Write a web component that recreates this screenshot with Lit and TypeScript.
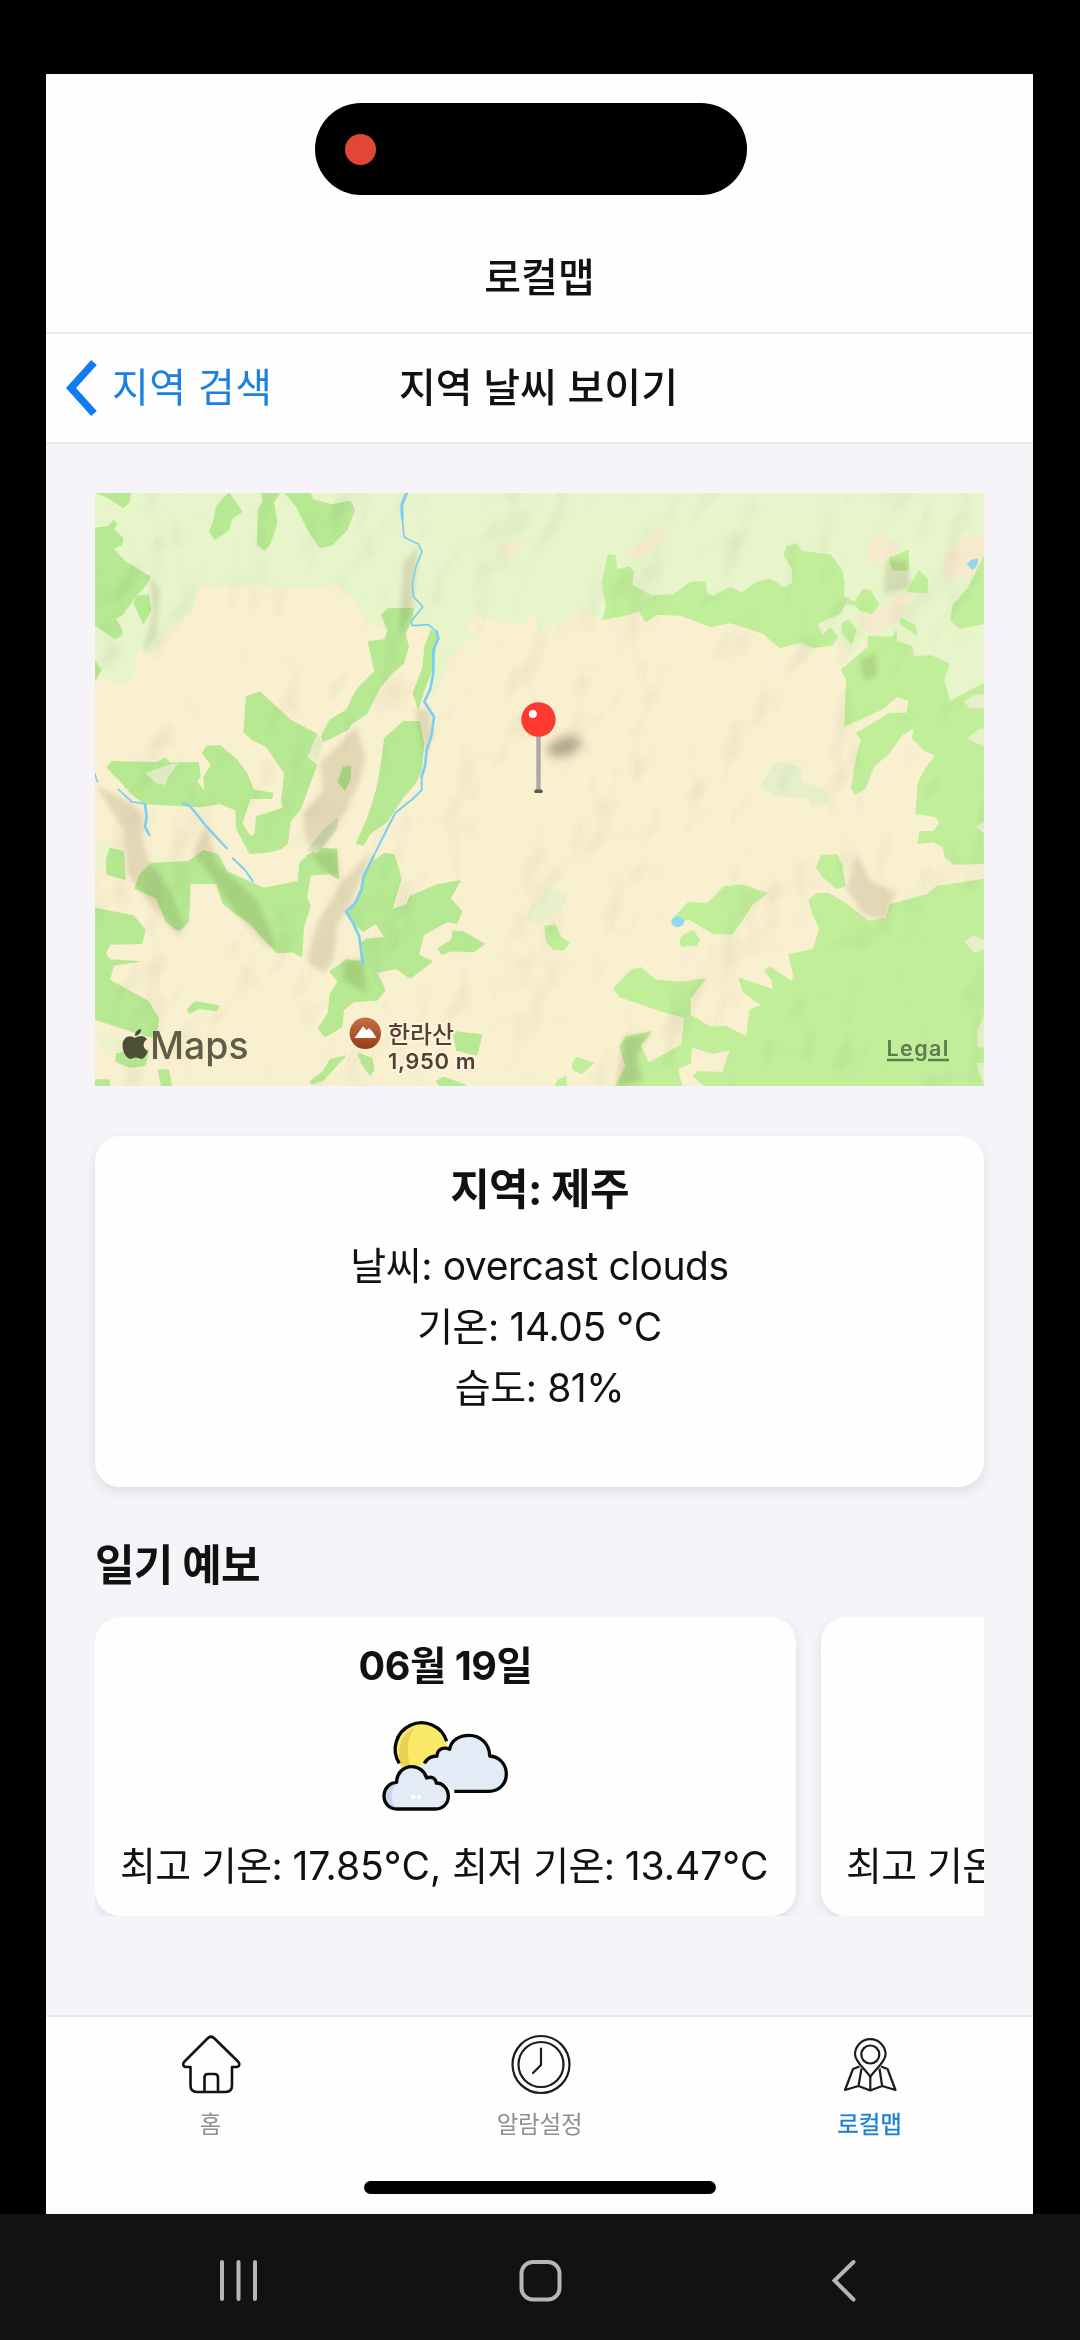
import { LitElement, html, svg, css } from "lit";
import { customElement, property } from "lit/decorators.js";

const FOREST_WEST = [
  "20,38 122,38 118,65 100,82 75,65 50,50",
  "400,55 418,40 455,95 425,115 415,150 375,178 360,155 375,110 380,80",
  "515,38 570,38 550,65 560,130 540,190 525,210 503,195 505,90 520,65",
  "585,38 660,38 668,60 725,75 780,65 793,90 770,150 725,195 690,203 655,150 620,80",
  "16,145 55,140 70,122 80,132 70,148 98,175 95,195 68,205 105,245 180,290 170,310 135,350 100,400 75,415 95,450 95,465 75,475 16,435",
  "140,350 175,345 182,390 160,430 145,395 133,370",
  "16,545 32,570 16,600",
  "875,405 895,387 970,385 965,420 945,460 955,500 940,550 905,580 870,620 830,700 785,730 770,750 700,785 695,770 720,720 770,690 800,630 855,575 835,485 885,480 895,450",
  "1025,450 1040,465 1030,560 1005,620 985,685 970,640 1000,560 1005,500",
  "470,650 510,637 600,720 680,762 652,832 680,855 655,920 632,985 600,1025 592,1090 575,1105 540,1115 480,1120 440,1045 438,990 390,970 330,980 160,970 120,935 52,862 65,845 200,848 225,835 240,850 325,848 330,890 320,905 345,940 342,890 365,855 338,820 350,800 390,797 440,840 470,880 490,930 548,940 545,955 480,955 455,1030 480,1070 495,1065 500,1010 580,985 575,960 585,880 530,800 490,780 462,755",
  "760,862 782,860 780,900 765,930 745,905",
  "885,775 940,725 988,725 1000,790 995,870 975,910 940,950 890,1025 840,1060 820,1095 800,1090 835,1010 860,930 870,880",
  "50,1115 60,1105 100,1115 105,1198 50,1182",
  "135,1225 150,1185 185,1150 295,1145 340,1112 385,1125 410,1175 520,1225 625,1205 630,1150 655,1125 690,1105 740,1108 745,1195 720,1180 660,1185 650,1250 660,1280 640,1340 635,1430 610,1415 560,1418 480,1330 430,1295 400,1270 380,1210 300,1210 295,1325 265,1352 230,1325 200,1255",
  "16,1285 130,1308 165,1350 155,1390 60,1392 45,1420 60,1440 145,1445 70,1455 58,1500 175,1565 205,1615 200,1665 180,1670 130,1655 16,1618",
  "292,1590 315,1565 385,1578 380,1592 325,1585 300,1600",
  "820,1200 850,1145 885,1120 912,1125 933,1195 905,1290 950,1275 960,1250 1040,1215 1110,1203 1080,1255 1115,1295 1100,1330 1070,1325 1000,1365 985,1425 1025,1445 960,1495 920,1465 830,1482 820,1460 812,1390 830,1378 885,1372 858,1330 820,1353 790,1330 775,1300 795,1270",
  "1045,1405 1085,1380 1090,1353 1120,1356 1183,1392 1150,1415 1085,1412 1055,1422",
  "720,1475 770,1440 820,1445 825,1480 860,1480 885,1530 860,1560 790,1565 760,1590 755,1640 705,1670 685,1645 715,1600 720,1545 745,1505",
  "660,1805 700,1775 720,1740 765,1728 700,1800 665,1812",
  "805,1720 845,1735 852,1770 840,1785 815,1750",
  "205,1770 235,1770 245,1818 215,1818",
  "80,1720 110,1700 175,1710 165,1755 120,1762 78,1745",
  "1090,1655 1175,1665 1160,1725 1100,1710",
  "1040,1805 1060,1792 1125,1815 1125,1818 1050,1818",
  "16,1800 58,1800 58,1818 16,1818",
];

const FOREST_EAST = [
  "205,225 225,228 230,270 265,262 280,275 275,315 335,348 400,345 450,308 495,305 500,340 520,350 570,322 605,340 650,308 690,298 735,325 758,310 757,265 733,225 740,200 770,192 785,215 870,225 905,270 912,310 910,350 945,368 970,328 990,332 1015,372 995,400 960,390 945,375 915,370 900,400 830,430 848,468 870,445 893,470 875,495 820,502 780,485 720,503 670,460 570,427 515,440 420,405 350,402 318,425 297,392 270,402 190,418 200,380 187,310",
  "925,420 948,450 935,490 905,460 908,430",
  "1105,212 1105,270 1060,270 1048,235",
  "1137,273 1163,300 1160,338 1102,335",
  "1085,415 1125,438 1130,463 1080,430",
  "1332,230 1332,430 1260,445 1232,420 1240,375 1285,325",
  "905,570 985,500 985,470 1060,472 1068,452 1070,485 1115,500 1120,530 1175,528 1227,552 1210,600 1230,665 1332,610 1332,1150 1240,1152 1215,1130 1210,1100 1180,1085 1135,1090 1140,1055 1180,1055 1200,1030 1190,1010 1128,1000 1135,910 1155,870 1188,825 1160,815 1117,775 1125,740 1085,765 1050,815 1000,860 975,925 945,942 935,925 950,830 965,780 950,760 975,745 1050,700 1100,700 1108,660 1070,650 1030,685 915,738 920,600",
  "845,1128 890,1125 905,1155 915,1218 890,1225 850,1190 830,1162",
  "405,1310 445,1268 500,1272 530,1245 550,1222 605,1215 680,1240 635,1275 600,1330 575,1362 520,1360 470,1330 445,1315 430,1325",
  "420,1380 430,1365 460,1352 478,1380 470,1395 425,1398",
  "15,1340 45,1335 65,1375 88,1388 70,1410 40,1408 20,1385",
  "222,1525 275,1470 302,1463 345,1500 420,1507 495,1497 450,1555 450,1605 510,1642 560,1640 620,1672 630,1590 665,1575 610,1535 597,1495 700,1530 697,1500 675,1470 690,1462 755,1505 762,1490 747,1425 820,1408 840,1345 820,1305 807,1260 830,1242 865,1240 930,1280 985,1325 1040,1315 1050,1275 1160,1245 1190,1220 1332,1198 1332,1818 495,1818 460,1788 475,1775 548,1778 573,1708 520,1720 455,1700 450,1750 412,1765 425,1818 228,1818 258,1760 240,1700 260,1670 335,1655 300,1695 325,1750 425,1695 435,1612 370,1595 240,1550",
  "97,1755 110,1732 160,1750 125,1780 100,1770",
  "45,1818 55,1800 78,1790 78,1818",
];

const SAND = [
  "265,205 300,195 355,152 375,160 370,185 320,215 290,235",
  "1010,170 1045,170 1072,210 1000,255 980,225",
  "945,410 1040,375 1080,345 1115,345 1080,415 1000,465",
  "1215,240 1250,190 1290,165 1332,165 1332,240 1290,300 1260,285 1220,300",
  "-125,200 -55,180 -60,205 -90,240",
];

const MEADOW_EAST = [
  "1275,665 1300,648 1332,645 1332,683 1290,683",
  "1285,775 1320,748 1332,748 1332,798",
  "1275,1385 1300,1367 1332,1382 1332,1405 1305,1417",
  "1312,1660 1332,1610 1332,1700 1315,1700",
  "1312,1750 1332,1750 1332,1810",
  "1312,1040 1332,1025 1332,1060",
  "660,920 705,850 740,848 780,870 785,905 860,935 862,965 820,980 800,950 720,950",
];

const RIVERS: Array<[string, number]> = [
  ["950,38 935,75 937,115", 9],
  ["937,115 942,170 962,182 985,192 996,215 978,260 967,310 970,350 998,380 963,425 968,437 1015,434 1040,455", 5],
  ["1040,455 1045,475 1030,510 1030,580 1020,630 1003,665 1032,710 1025,765 1010,810 1005,860 995,890", 8],
  ["995,890 995,930 965,960 945,975 915,1000 890,1050 850,1130", 6],
  ["850,1130 820,1190 815,1230 795,1270 768,1295 790,1330 808,1370 818,1450", 8],
  ["14,880 22,905", 5],
  ["85,928 125,965 165,972", 5],
  ["165,972 170,1010 165,1040 178,1065", 8],
  ["280,970 300,978 350,1040 410,1105", 7],
  ["428,1135 465,1170 488,1203", 6],
];

const RELIEF = [
  "690,850 800,740 825,830 810,900 770,990 700,1110 650,1090 640,1000 700,930",
  "850,1110 780,1270 740,1340 730,1440 700,1480 650,1440 680,1330 760,1200",
  "16,915 90,950 160,1000 160,1090 180,1150 240,1230 285,1340 265,1370 190,1280 110,1180 100,1050 40,950",
  "310,1120 350,1030 380,1150 500,1260 560,1400 530,1400 430,1290 370,1200",
  "660,1120 740,1110 750,1200 700,1170",
  "760,1440 820,1440 830,1540 760,1500",
  "975,685 1015,690 1030,760 1005,830 985,740",
  "940,250 985,200 965,400 925,480",
  "180,290 210,330 200,460 160,520 190,400",
  "2300,1120 2340,1200 2420,1240 2380,1320 2330,1310 2270,1230",
  "2390,240 2450,240 2460,320 2380,340",
  "2310,540 2360,520 2360,590 2320,600",
  "1600,1670 1680,1660 1640,1730 1660,1800 1580,1818",
];

@customElement("terrain-map")
export class TerrainMap extends LitElement {
  static styles = css`
    :host { display: block; height: 593px; }
    svg { display: block; width: 889px; height: 593px; }
    .label { font-family: Inter, "Noto Sans CJK KR", sans-serif; }
    .brand { font-size: 37.5px; font-weight: 500; fill: #5f5c48; }
    .peak { font-size: 22px; font-weight: 600; fill: #5a3f29; stroke: #fbf4e4; stroke-width: 4px; paint-order: stroke; stroke-linejoin: round; }
    .peak-ko { font-size: 24px; font-weight: 500; }
    .legal { font-size: 21.5px; font-weight: 600; fill: #5f7a4b; }
    .shade { mix-blend-mode: multiply; }
  `;

  private areas(list: string[], fill: string) {
    return list.map((points) => svg`<polygon points=${points} fill=${fill} stroke=${fill} stroke-width="4" stroke-linejoin="round"/>`);
  }

  render() {
    return html`
      <svg viewBox="95 493 889 593">
        <defs>
          <filter id="paper" x="0" y="0" width="100%" height="100%" color-interpolation-filters="sRGB">
            <feTurbulence type="fractalNoise" baseFrequency="0.013 0.01" numOctaves="3" seed="11"/>
            <feColorMatrix values="0 0 0 0 0  0 0 0 0 0  0 0 0 0 0  1 0 0 0 0"/>
            <feDiffuseLighting surfaceScale="10" diffuseConstant="1.3" lighting-color="#ffffff">
              <feDistantLight azimuth="215" elevation="53"/>
            </feDiffuseLighting>
          </filter>
          <filter id="soft" x="-20%" y="-20%" width="140%" height="140%"><feGaussianBlur stdDeviation="8"/></filter>
          <filter id="drop" x="-60%" y="-100%" width="220%" height="300%"><feGaussianBlur stdDeviation="5.5"/></filter>
          <linearGradient id="badge" x1="0" y1="0" x2="0" y2="1">
            <stop offset="0" stop-color="#c27142"/><stop offset="1" stop-color="#9a3b17"/>
          </linearGradient>
        </defs>
        <rect x="95" y="493" width="889" height="593" fill="#f9f0cf"/>
        <g transform="translate(90 480) scale(.33333)">
          <polygon fill="#e8f4ca" points="16,38 2682,38 2682,670 2580,660 2450,520 2330,480 2280,530 2250,480 2170,500 2070,500 1990,440 1870,420 1780,395 1650,390 1540,420 1460,390 1440,425 1380,435 1350,460 1330,395 1310,430 1200,425 1155,400 1125,440 1150,470 1080,530 1050,610 1030,650 1020,600 1030,480 1000,440 880,440 830,430 800,370 740,315 600,330 500,315 325,320 310,400 240,435 210,490 180,520 145,510 130,600 90,610 30,595 16,590"/>
          ${this.areas(FOREST_WEST, "#b6e992")}
          <polygon points="165,880 235,855 265,850 235,890 225,915 200,910" fill="#e3ecc4"/>
          <polygon points="680,765 700,785 685,840 652,832" fill="#e3ecc4"/>
          <polygon points="700,1050 745,1010 740,1050 680,1120 650,1110" fill="#d9e4bb"/>
          <polygon points="20,1080 50,1070 60,1100 35,1180 20,1170" fill="#eef2cd"/>
          <polygon points="20,1670 110,1665 130,1710 80,1720 40,1715" fill="#eef2cd"/>
          <g transform="translate(1350 0)">
            ${this.areas(SAND, "#f7ebcd")}
            ${this.areas(FOREST_EAST, "#c1ee99")}
            ${this.areas(MEADOW_EAST, "#e6efca")}
            <polygon points="-30,1280 0,1260 20,1220 85,1240 60,1300 35,1305 0,1340 -40,1320" fill="#eaefcb"/>
            <ellipse cx="413" cy="1325" rx="19" ry="16" fill="#90d8f6"/>
            <path d="M1280 253l14-14 22-4-5 22-14 13z" fill="#90d8f6"/>
          </g>
          <g class="shade" filter="url(#soft)">${RELIEF.map((p) => svg`<polygon points=${p} fill="#9a8f72" fill-opacity=".22"/>`)}</g>
        </g>
        <rect class="shade" x="95" y="493" width="889" height="593" filter="url(#paper)" opacity=".15"/>
        <g transform="translate(90 480) scale(.33333)" fill="none" stroke="#7ccff2" stroke-linejoin="round" stroke-linecap="round">
          ${RIVERS.map(([points, w]) => svg`<polyline points=${points} stroke-width=${w}/>`)}
        </g>
        <ellipse cx="564.5" cy="746.5" rx="18" ry="9" transform="rotate(-18 564.5 746.5)" fill="#6f6752" opacity=".56" filter="url(#drop)"/>
        <rect x="536.3" y="734" width="4.4" height="57" fill="#aaa9a6"/>
        <rect x="534.3" y="789.5" width="8.4" height="3.6" rx="1.6" fill="#5b574b"/>
        <circle cx="538.5" cy="719.5" r="17.2" fill="#fe3a30"/>
        <circle cx="532.8" cy="714" r="4" fill="#fff"/>
        <g transform="translate(122.3 1029) scale(1.06)" fill="#4c4f36">
          <path d="M12 8.2c1.5 0 3.1-1.5 5.8-1.5 2.2 0 4.300 1.200 5.500 3-4.700 2.800-3.900 9.300 .9 11.200-1.200 3.300-3.700 7.300-6.300 7.300-1.900 0-2.900-1.200-5.100-1.200s-3.400 1.200-5.100 1.200C4 28.200 .2 21.300 .2 15.600 .2 9.900 3.800 6.800 7.200 6.800c2.100 0 3.700 1.400 4.800 1.400z"/>
          <path d="M11.800 6.600C11.700 3.300 14.400 .4 17.600 0c.4 3.600-2.700 6.700-5.800 6.600z"/>
        </g>
        <text class="label brand" x="150" y="1059.300" textLength="98.500" lengthAdjust="spacingAndGlyphs">Maps</text>
        <circle cx="365.300" cy="1033.300" r="15.700" fill="url(#badge)"/>
        <path d="M354.500 1038l8.500-11.800 3.600 4 2-2.200 3.300 2.700 4.600 7.300z" fill="#fff"/>
        <text class="label peak peak-ko" x="388" y="1042.500" textLength="66">한라산</text>
        <text class="label peak" x="388" y="1069" textLength="87.500">1,950 m</text>
        <text class="label legal" x="886.500" y="1056" textLength="62">Legal</text>
        <path d="M887 1060h26.500M928 1060h21" stroke="#5f7a4b" stroke-width="2.400"/>
      </svg>
    `;
  }
}

@customElement("forecast-card")
export class ForecastCard extends LitElement {
  @property() date = "";
  @property() range = "";

  static styles = css`
    :host {
      box-sizing: border-box; display: flex; flex-direction: column; align-items: center;
      flex: none; width: 701px; height: 299px; padding: 24px 25px 0; border-radius: 25px;
      background: #fffeff; box-shadow: 0 4px 12px rgba(30, 25, 45, .1); color: #111;
    }
    .date { height: 50px; line-height: 50px; font-size: 39.5px; font-weight: 700; white-space: nowrap; letter-spacing: -.45px; }
    svg { display: block; width: 200px; height: 140px; margin-left: 7px; }
    .range { align-self: flex-start; height: 60px; line-height: 60px; margin-top: 5px; font-size: 39px; white-space: nowrap; letter-spacing: -.6px; }
    .value { letter-spacing: 0; }
  `;

  render() {
    return html`
      <div class="date">${this.date}</div>
      <svg viewBox="0 0 600 420" fill="none" stroke-linecap="butt" stroke-linejoin="round">
        <path d="M151 217A79 79 0 1 1 293 151L296 170 228 218 160 240z" fill="#fae869"/>
        <path d="M158 222C140 180 155 130 196 110 176 140 170 180 184 224z" fill="#e8d24f"/>
        <path d="M151 217A79 79 0 1 1 293 151" stroke="#060606" stroke-width="10"/>
        <path d="M226 216c8-14 22-22 38-22 0-18 18-30 38-20 4-28 30-42 58-42 34 0 62 26 62 62 30 2 50 26 50 54 0 30-22 52-52 52H316L260 260 215 230z" fill="#e3ebf6"/>
        <path d="M226 217c8-14 22-22 38-22 0-18 18-30 38-20 4-28 30-42 58-42 34 0 62 26 62 62 30 2 50 26 50 54 0 30-22 52-52 52H316" stroke="#060606" stroke-width="10"/>
        <path d="M144 354c-24 0-39-18-39-39 0-22 16-40 38-41 0-28 20-47 45-47 22 0 40 14 45 34 16-7 28 3 29 15 20 0 36 18 36 40 0 22-16 38-38 38z" fill="#e3ebf6"/>
        <path d="M146 352c-22-12-26-50-2-74 2-22 8-36 22-44-30 0-24 38-24 40-30 4-38 30-36 44 2 20 16 34 40 34z" fill="#c9d7ee"/>
        <path d="M144 354c-24 0-39-18-39-39 0-22 16-40 38-41 0-28 20-47 45-47 22 0 40 14 45 34 16-7 28 3 29 15 20 0 36 18 36 40 0 22-16 38-38 38z" stroke="#060606" stroke-width="10"/>
        <circle cx="193" cy="318" r="7" fill="#fff"/><circle cx="210" cy="318" r="6" fill="#fff"/>
      </svg>
      <div class="range">${this.range.split(/([\d.]+°C,? ?)/).map((part, i) => (i % 2 ? html`<span class="value">${part}</span>` : part))}</div>
    `;
  }
}

@customElement("app-root")
export class AppRoot extends LitElement {
  static styles = css`
    :host {
      display: flex; flex-direction: column; box-sizing: border-box; width: 1080px; height: 2340px; padding-top: 74px;
      background: #000; font-family: Inter, "Noto Sans CJK KR", sans-serif; color: #111; overflow: hidden;
    }
    .screen { display: flex; flex-direction: column; width: 987px; height: 2140px; margin-left: 46px; background: #f6f4f8; }
    .top { box-sizing: border-box; height: 260px; padding-top: 29px; background: #fffeff; border-bottom: 2px solid #ebe9ed; display: flex; flex-direction: column; align-items: center; }
    .island { box-sizing: border-box; width: 432px; height: 92px; margin-right: 17px; padding-left: 30px; border-radius: 46px; background: #000; display: flex; align-items: center; }
    .dot { width: 31px; height: 31px; border-radius: 50%; background: #e24736; }
    .title { line-height: 60px; font-size: 40px; font-weight: 500; white-space: nowrap; letter-spacing: 0; }
    .top .title { margin-top: 53px; }
    .bar { box-sizing: border-box; height: 110px; background: #fffeff; border-bottom: 2px solid #ebe9ed; display: grid; grid-template-columns: 353px 285px 1fr; align-items: center; }
    .back { display: flex; align-items: center; gap: 15px; padding-left: 18px; color: #1a80e2; font-size: 40px; line-height: 60px; white-space: nowrap; letter-spacing: .4px; }
    .content { flex: 1; display: flex; flex-direction: column; padding: 49px 49px 0; }
    .card { box-sizing: border-box; height: 351px; margin-top: 50px; padding-top: 23px; border-radius: 25px; background: #fffeff; box-shadow: 0 5px 12px rgba(30, 25, 45, .1); text-align: center; }
    .region { height: 60px; line-height: 60px; font-size: 43px; font-weight: 700; letter-spacing: -.7px; }
    .fact { height: 61px; line-height: 61px; font-size: 39px; letter-spacing: -.4px; }
    .region + .fact { margin-top: 16px; }
    .heading { height: 60px; line-height: 60px; margin: 48px 0 22px; font-size: 43px; font-weight: 700; letter-spacing: -.7px; }
    .scroller { display: flex; gap: 25px; height: 299px; overflow: hidden; }
    .tabs { box-sizing: border-box; height: 199px; border-top: 2px solid #ebe9ed; background: #fffeff; display: grid; grid-template-columns: repeat(3, 1fr); grid-template-rows: 130px auto; }
    .tab { display: flex; flex-direction: column; align-items: center; padding-top: 13px; font-size: 23.5px; line-height: 36px; color: #8f8f93; letter-spacing: -.2px; }
    .tab svg { width: 70px; height: 70px; margin-bottom: 7px; }
    .active { color: #1a80d6; -webkit-text-stroke: .3px currentColor; padding-left: 2px; }
    .indicator { grid-column: 1 / -1; justify-self: center; width: 352px; height: 13px; border-radius: 7px; margin-top: 34px; background: #000; }
    .nav { height: 126px; background: #121212; }
    .nav svg { display: block; }
  `;

  render() {
    return html`
      <main class="screen">
        <header class="top">
          <div class="island"><span class="dot"></span></div>
          <div class="title">로컬맵</div>
        </header>
        <div class="bar">
          <div class="back">
            <svg width="33" height="56" viewBox="0 0 33 56" fill="none" stroke="#117cf2" stroke-width="7.500" stroke-linecap="butt" stroke-linejoin="miter"><path d="M30 2.500L7 28 30 53.500"/></svg>
            <span>지역 검색</span>
          </div>
          <div class="title">지역 날씨 보이기</div>
        </div>
        <section class="content">
          <terrain-map></terrain-map>
          <article class="card">
            <div class="region">지역: 제주</div>
            <div class="fact">날씨: overcast clouds</div>
            <div class="fact">기온: 14.05 °C</div>
            <div class="fact">습도: 81%</div>
          </article>
          <div class="heading">일기 예보</div>
          <div class="scroller">
            <forecast-card date="06월 19일" range="최고 기온: 17.85°C, 최저 기온: 13.47°C"></forecast-card>
            <forecast-card range="최고 기온"></forecast-card>
          </div>
        </section>
        <nav class="tabs">
          <div class="tab">
            <svg viewBox="0 0 70 70" fill="none" stroke="#111" stroke-width="2.600" stroke-linejoin="round"><path d="M14.500 37v18.500q0 6.500 6.500 6.500h28.500q6.500 0 6.500-6.500V37h3.500c4 0 5-3 2.500-5.500L38.500 8.500q-3.500-3.500-7 0L8.500 31.500c-2.500 2.500-1.500 5.500 2.500 5.500z"/><path d="M28.500 62V47.500q0-3.500 3.500-3.500h6.500q3.500 0 3.500 3.500V62"/></svg>
            홈
          </div>
          <div class="tab">
            <svg viewBox="0 0 70 70" fill="none" stroke="#1b1b1b" stroke-width="2.200" stroke-linecap="round" stroke-linejoin="round"><circle cx="36" cy="34.500" r="28.500"/><circle cx="36" cy="34.500" r="22.500"/><path d="M36 18.500v16.500l-8 8"/></svg>
            알람설정
          </div>
          <div class="tab active">
            <svg viewBox="0 0 70 70" fill="none" stroke="#1b1b1b" stroke-width="2.200" stroke-linejoin="round"><path d="M35.300 47C32 41 20 32 20 24.500a15.300 15.300 0 0 1 30.600 0C50.600 32 38.600 41 35.300 47z"/><circle cx="35.300" cy="24.500" r="9"/><path d="M24.500 36.500L18 39 10 60l13.500-4 11.800 4.500 11.800-4.500L60.500 60l-8-21-6.500-2.500M26.500 38.500L23.500 56M44.500 38.500L47.100 56M35.300 46.500v14"/></svg>
            로컬맵
          </div>
          <div class="indicator"></div>
        </nav>
      </main>
      <footer class="nav">
        <svg width="1080" height="126" viewBox="0 0 1080 126" fill="none" stroke="#b6b6b6" stroke-width="4" stroke-linecap="round" stroke-linejoin="round">
          <path d="M222 48v37M238.500 48v37M255 48v37"/>
          <rect x="521.500" y="48" width="38" height="37.500" rx="11.500"/>
          <path d="M853.500 48L834.500 66.500 853.500 85.500" stroke-linejoin="miter"/>
        </svg>
      </footer>
    `;
  }
}
